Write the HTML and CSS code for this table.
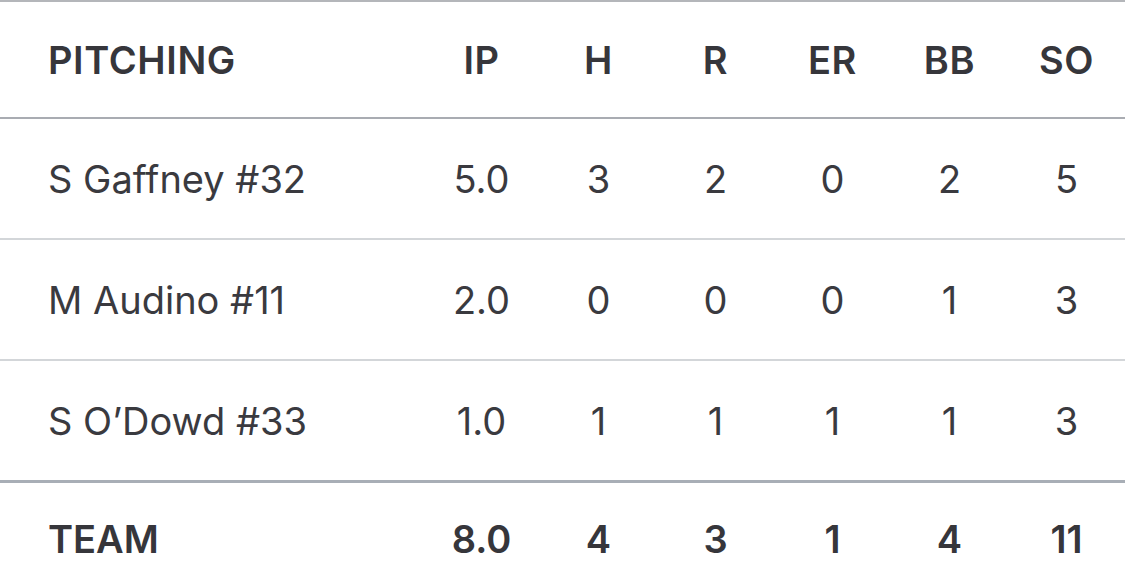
FILE: index.html
```html
<!DOCTYPE html>
<html>
<head>
<meta charset="utf-8">
<link rel="stylesheet" href="styles.css">
</head>
<body>
<div class="box">
  <div class="row head">
    <div class="name">PITCHING</div>
    <div class="c">IP</div><div class="c">H</div><div class="c">R</div><div class="c">ER</div><div class="c">BB</div><div class="c">SO</div>
  </div>
  <div class="row body">
    <div class="name">S Gaffney #32</div>
    <div class="c">5.0</div><div class="c">3</div><div class="c">2</div><div class="c">0</div><div class="c">2</div><div class="c">5</div>
  </div>
  <div class="row body">
    <div class="name">M Audino #11</div>
    <div class="c">2.0</div><div class="c">0</div><div class="c">0</div><div class="c">0</div><div class="c">1</div><div class="c">3</div>
  </div>
  <div class="row body last">
    <div class="name">S O’Dowd #33</div>
    <div class="c">1.0</div><div class="c">1</div><div class="c">1</div><div class="c">1</div><div class="c">1</div><div class="c">3</div>
  </div>
  <div class="row team">
    <div class="name">TEAM</div>
    <div class="c">8.0</div><div class="c">4</div><div class="c">3</div><div class="c">1</div><div class="c">4</div><div class="c">11</div>
  </div>
</div>
</body>
</html>
```
FILE: styles.css
```css
html, body {
  margin: 0;
  padding: 0;
  background: #ffffff;
  overflow: hidden;
}
.box {
  width: 1125px;
  height: 586px;
  border-top: 2px solid #b4b6ba;
  font-family: "Inter", "Liberation Sans", sans-serif;
  color: #36363b;
  box-sizing: border-box;
}
.row {
  display: grid;
  grid-template-columns: 1fr repeat(6, 117px);
  align-items: center;
}
.name {
  padding-left: 48px;
}
.c {
  text-align: center;
}
.head {
  height: 115px;
  border-bottom: 2px solid #a9acb2;
  font-size: 38px;
  font-weight: 600;
  letter-spacing: 0.6px;
}
.body {
  height: 119px;
  border-bottom: 2px solid #d3d6d9;
  font-size: 38px;
  font-weight: 400;
  color: #3a3a3f;
}
.body.last {
  border-bottom: 3px solid #a8aeb6;
}
.team {
  height: 100px;
  padding-top: 6px;
  font-size: 38px;
  font-weight: 600;
}
```
